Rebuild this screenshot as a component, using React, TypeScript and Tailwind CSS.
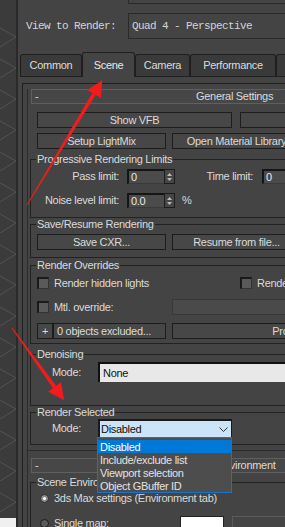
import React from "react";

function Btn({ className = "", children }: { className?: string; children?: React.ReactNode }) {
  return (
    <div className={"h-[16px] shrink-0 border border-[#1d1d1d] bg-[#474747] flex items-center whitespace-nowrap leading-none " + className}>
      {children}
    </div>
  );
}

function Spinner({ value }: { value: string }) {
  return (
    <div className="flex h-[15px] shrink-0">
      <div className="w-[37px] border-t-2 border-l-2 border-[#151515] border-b border-b-[#3a3a3a] bg-[#4b4b4b] pl-[2px] text-[#e8e8e8] leading-[12px]">
        {value}
      </div>
      <div className="w-[11px] border border-[#1d1d1d] bg-[#464646] flex flex-col items-center justify-center gap-[2px]">
        <svg width="5" height="3" viewBox="0 0 5 3">
          <path d="M2.5 0L5 3H0z" fill="#bdbdbd" />
        </svg>
        <svg width="5" height="3" viewBox="0 0 5 3">
          <path d="M0 0h5L2.5 3z" fill="#bdbdbd" />
        </svg>
      </div>
    </div>
  );
}

function Check() {
  return <div className="w-[12px] h-[12px] shrink-0 border-t-2 border-l-2 border-r border-b border-[#1a1a1a] border-r-[#333333] border-b-[#333333] bg-[#5a5a5a]" />;
}

function Radio({ on }: { on?: boolean }) {
  return on ? (
    <div className="w-[9px] h-[9px] shrink-0 rounded-full border border-[#2a2a2a] bg-[#8c8c8c] flex items-center justify-center">
      <div className="w-[3px] h-[3px] rounded-full bg-white" />
    </div>
  ) : (
    <div className="w-[9px] h-[9px] shrink-0 rounded-full border border-[#1a1a1a] bg-[#5a5a5a]" />
  );
}

function Group({ label, className = "", children }: { label: string; className?: string; children?: React.ReactNode }) {
  return (
    <fieldset className={"ml-[2px] w-[420px] min-w-0 border border-[#222222] " + className}>
      <legend className="ml-[5px] px-[1px] leading-[13px] whitespace-nowrap">{label}</legend>
      {children}
    </fieldset>
  );
}

function Header({ title, titleClass }: { title: string; titleClass: string }) {
  return (
    <div className="ml-[3px] mt-[5px] h-[15px] w-[408px] border border-[#5f5f5f] bg-[#474747] flex items-center pl-[3px] leading-none whitespace-nowrap">
      <span className="w-[8px]">-</span>
      <span className={titleClass}>{title}</span>
    </div>
  );
}

function Tab({ label, active, className }: { label: string; active?: boolean; className: string }) {
  return active ? (
    <div className={"relative z-10 h-[25px] -mb-px shrink-0 rounded-t-[3px] border border-b-0 border-[#1f1f1f] bg-[#444444] flex items-center justify-center text-[#e8e8e8] " + className}>
      {label}
    </div>
  ) : (
    <div className={"h-[22px] shrink-0 rounded-t-[3px] border border-b-0 border-[#1f1f1f] bg-[#3a3a3a] flex items-center justify-center text-[#dcdcdc] " + className}>
      {label}
    </div>
  );
}

export default function App() {
  const grid = Array.from({ length: 17 }, (_, i) => 28 + i * 31);
  return (
    <div className="relative flex items-start w-[285px] h-[527px] overflow-hidden bg-[#444444] text-[11px] tracking-[-0.3px] text-[#dadada] font-['Liberation_Sans',Arial,sans-serif]">
      {/* viewport behind the dialog */}
      <div className="w-[16px] h-[527px] shrink-0 flex flex-col">
        <div className="flex-1 bg-[#3b3b3b] overflow-hidden">
          <svg width="16" height="518" className="block">
            {grid.map((y) => (
              <g key={y} stroke="#535353" strokeWidth="1">
                <line x1="0" y1={y} x2="16" y2={y + 9} />
                <line x1="0" y1={y + 19} x2="16" y2={y + 9} />
              </g>
            ))}
          </svg>
        </div>
        <div className="h-[9px] bg-[#f0f0f0]" />
      </div>
      <div className="w-[2px] h-[527px] shrink-0 bg-[#2a2a2a]" />

      {/* render setup dialog */}
      <div className="w-[440px] shrink-0 flex flex-col">
        <div className="ml-[110px] h-[4px] shrink-0 border-l border-b border-[#2a2a2a]" />
        <div className="mt-[9px] h-[26px] shrink-0 flex font-['Liberation_Mono',monospace] tracking-[-0.6px] text-[#d4d4d4]">
          <div className="w-[110px] pl-[8px] flex items-center whitespace-nowrap">View to Render:</div>
          <div className="flex-1 border border-[#2a2a2a] flex items-center pl-[3px] whitespace-nowrap">Quad 4 - Perspective</div>
        </div>

        <div className="mt-[13px] h-[24px] shrink-0 pl-[2px] flex items-end">
          <Tab label="Common" className="w-[62px]" />
          <Tab label="Scene" active className="w-[53px]" />
          <Tab label="Camera" className="w-[55px]" />
          <Tab label="Performance" className="w-[86px]" />
          <Tab label="System" className="w-[60px]" />
        </div>

        <div className="ml-[2px] shrink-0 border-t border-[#1f1f1f] pt-[6px] pl-[2px]">
          <div className="border-l border-t border-[#1f1f1f] pl-[4px]">
            {/* General Settings rollout */}
            <div className="border-l border-b border-[#2c2c2c] pb-[5px]">
              <Header title="General Settings" titleClass="ml-[153px]" />
              <div className="mt-[8px] pl-[9px] flex gap-[8px]">
                <Btn className="w-[195px] justify-center">Show VFB</Btn>
                <Btn className="w-[195px] justify-center" />
              </div>
              <div className="mt-[5px] pl-[9px] flex gap-[6px]">
                <Btn className="w-[129px] justify-center">Setup LightMix</Btn>
                <Btn className="w-[129px] justify-center">Open Material Library</Btn>
              </div>

              <Group label="Progressive Rendering Limits" className="mt-[4px] pb-[9px]">
                <div className="mt-[3px] h-[15px] flex items-center whitespace-nowrap">
                  <div className="w-[88px] text-right">Pass limit:</div>
                  <div className="ml-[8px]">
                    <Spinner value="0" />
                  </div>
                  <div className="w-[78px] text-right">Time limit:</div>
                  <div className="ml-[9px]">
                    <Spinner value="0" />
                  </div>
                </div>
                <div className="mt-[9px] h-[15px] flex items-center whitespace-nowrap">
                  <div className="w-[88px] text-right">Noise level limit:</div>
                  <div className="ml-[8px]">
                    <Spinner value="0.0" />
                  </div>
                  <div className="ml-[7px]">%</div>
                </div>
              </Group>

              <Group label="Save/Resume Rendering" className="pb-[7px]">
                <div className="mt-[3px] pl-[6px] flex gap-[6px]">
                  <Btn className="w-[129px] justify-center">Save CXR...</Btn>
                  <Btn className="w-[129px] justify-center">Resume from file...</Btn>
                </div>
              </Group>

              <Group label="Render Overrides" className="mt-[1px] pb-[4px]">
                <div className="mt-[5px] h-[12px] pl-[6px] flex items-center whitespace-nowrap">
                  <div className="w-[203px] flex items-center">
                    <Check />
                    <span className="ml-[5px]">Render hidden lights</span>
                  </div>
                  <Check />
                  <span className="ml-[5px]">Render hidden objects</span>
                </div>
                <div className="mt-[10px] h-[16px] pl-[6px] flex items-center whitespace-nowrap">
                  <div className="w-[135px] flex items-center">
                    <Check />
                    <span className="ml-[5px]">Mtl. override:</span>
                  </div>
                  <div className="w-[256px] h-[16px] border border-[#383838] bg-[#4a4a4a]" />
                </div>
                <div className="mt-[8px] pl-[6px] flex items-center">
                  <Btn className="w-[16px] justify-center">+</Btn>
                  <Btn className="w-[113px] justify-start pl-[3px]">0 objects excluded...</Btn>
                  <Btn className="ml-[6px] w-[256px] justify-center">Properties...</Btn>
                </div>
              </Group>

              <Group label="Denoising" className="mt-[4px] pb-[23px]">
                <div className="mt-[1px] flex items-center">
                  <div className="w-[50px] text-right">Mode:</div>
                  <div className="ml-[17px] w-[300px] h-[20px] border-t-2 border-l-2 border-[#111111] bg-[#e8e8e8] text-[#111111] flex items-center pl-[3px]">
                    None
                  </div>
                </div>
              </Group>

              <Group label="Render Selected" className="pb-[6px]">
                <div className="flex items-center">
                  <div className="w-[50px] text-right">Mode:</div>
                  <div className="relative ml-[17px] w-[134px] h-[19px] border border-t-2 border-l-2 border-[#1a1a1a] bg-[#cce4f7] text-[#111111] flex items-center pl-[1px]">
                    Disabled
                    <svg className="ml-auto mr-[3px]" width="9" height="5" viewBox="0 0 9 5">
                      <path d="M0.5 0.5L4.5 4.5L8.5 0.5" fill="none" stroke="#333333" strokeWidth="1" />
                    </svg>
                    <div className="absolute left-[-3px] top-[16px] z-20 w-[135px] border border-[#1a73c8] bg-[#4d4d4d] pt-[2px] text-[#e2e2e2] whitespace-nowrap">
                      <div className="h-[13px] bg-[#0078d7] text-white pl-[2px] leading-[14px]">Disabled</div>
                      <div className="h-[13px] pl-[2px] leading-[14px]">Include/exclude list</div>
                      <div className="h-[13px] pl-[2px] leading-[14px]">Viewport selection</div>
                      <div className="h-[13px] pl-[2px] leading-[14px]">Object GBuffer ID</div>
                    </div>
                  </div>
                </div>
              </Group>
            </div>

            {/* Environment rollout */}
            <div className="border-l border-[#2c2c2c] pb-[30px]">
              <div className="h-[2px]" />
              <Header title="Environment" titleClass="ml-[174px]" />
              <Group label="Scene Environment" className="mt-[3px] pb-[20px]">
                <div className="mt-[2px] h-[14px] pl-[9px] flex items-center whitespace-nowrap">
                  <Radio on />
                  <span className="ml-[5px]">3ds Max settings (Environment tab)</span>
                </div>
                <div className="mt-[11px] h-[14px] pl-[9px] flex items-center whitespace-nowrap">
                  <div className="w-[140px] flex items-center">
                    <Radio />
                    <span className="ml-[5px]">Single map:</span>
                  </div>
                  <div className="w-[44px] h-[14px] border border-[#222222] bg-white" />
                  <div className="ml-[8px] w-[80px] h-[14px] border border-[#5a5a5a]" />
                </div>
              </Group>
            </div>
          </div>
        </div>
      </div>

      {/* red annotation arrows */}
      <svg className="absolute inset-0 pointer-events-none" width="285" height="527" viewBox="0 0 285 527">
        <polygon points="27.4,205.3 26.6,204.7 92.3,93 95.7,95" fill="#f21c1c" />
        <polygon points="102.3,80.3 100.8,98.1 87.2,89.9" fill="#f21c1c" />
        <polygon points="12.4,327.7 11.6,328.3 53,388.2 56.2,385.8" fill="#f21c1c" />
        <polygon points="64,400 61.1,382.3 48.1,391.7" fill="#f21c1c" />
      </svg>
    </div>
  );
}
